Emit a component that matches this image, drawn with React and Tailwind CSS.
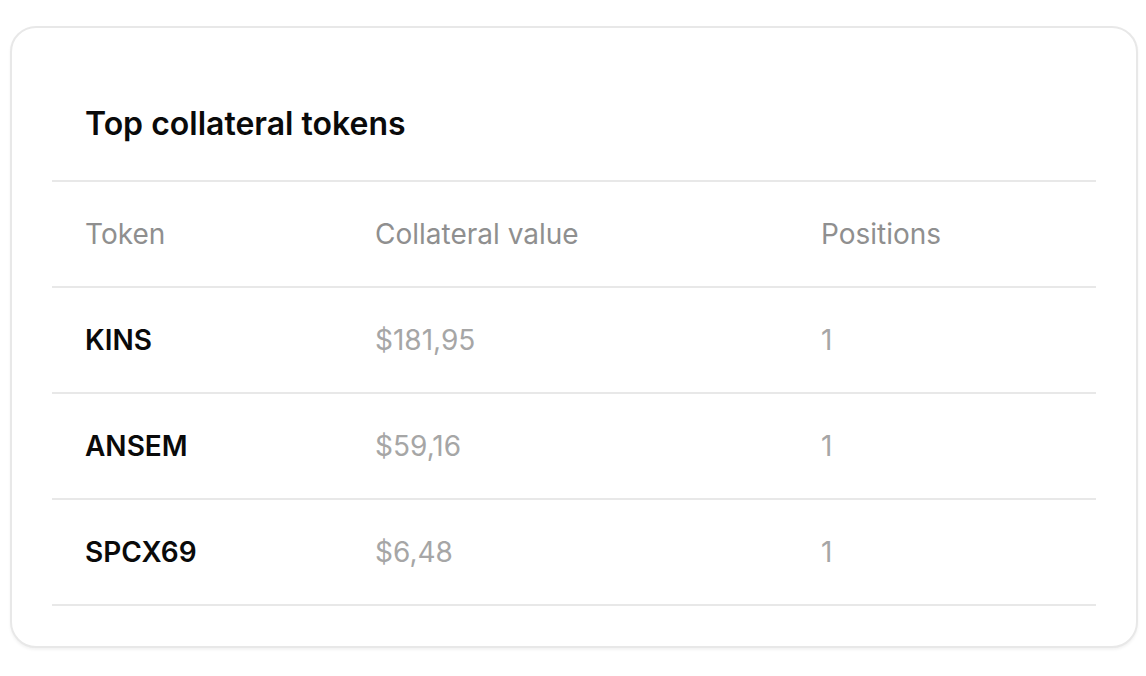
export default function App() {
  const rows = [
    { token: "KINS", value: "$181,95", pos: "1" },
    { token: "ANSEM", value: "$59,16", pos: "1" },
    { token: "SPCX69", value: "$6,48", pos: "1" },
  ];
  return (
    <div className="min-h-screen bg-white pt-[26px] pl-[10px]" style={{ fontFamily: "Inter, 'Noto Sans', sans-serif" }}>
      <div className="w-[1128px] rounded-[26px] border-2 border-[#e8e8e8] bg-white px-[40px] py-[40px] shadow-[0_2px_3px_rgba(0,0,0,0.05)]">
        <div className="border-b-2 border-[#e8e8e8] py-[36px] pl-[33px]">
          <h2 className="text-[32px] leading-[40px] font-semibold text-[#0a0a0a]">Top collateral tokens</h2>
        </div>
        <div className="grid grid-cols-[290px_446px_1fr] border-b-2 border-[#e8e8e8] h-[106px] items-center text-[28px] text-[#8f8f8f]">
          <div className="pl-[33px]">Token</div>
          <div className="pl-[33px]">Collateral value</div>
          <div className="pl-[33px]">Positions</div>
        </div>
        {rows.map((r) => (
          <div key={r.token} className="grid grid-cols-[290px_446px_1fr] border-b-2 border-[#e8e8e8] h-[106px] items-center text-[28px]">
            <div className="pl-[33px] font-semibold text-[#0a0a0a]">{r.token}</div>
            <div className="pl-[33px] text-[#a6a6a6]">{r.value}</div>
            <div className="pl-[33px] text-[#a6a6a6]">{r.pos}</div>
          </div>
        ))}
      </div>
    </div>
  );
}
